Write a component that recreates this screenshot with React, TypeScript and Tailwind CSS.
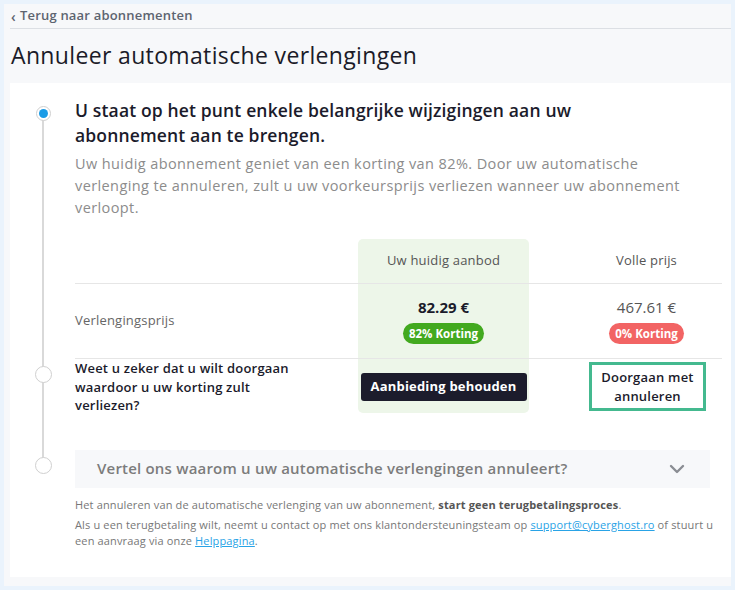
import React from "react";

function Chevron() {
  return (
    <svg width="16" height="10" viewBox="0 0 16 10" fill="none">
      <path d="M2 2l6 6 6-6" stroke="#8a8d93" strokeWidth="2.4" strokeLinecap="round" strokeLinejoin="round" />
    </svg>
  );
}

export default function App() {
  return (
    <div
      className="w-[735px] h-[590px] bg-[#eaf3fc] pt-[4px] pl-[4px] overflow-hidden"
      style={{ fontFamily: '"Open Sans", "DejaVu Sans", sans-serif' }}
    >
      <div className="w-[727px] h-[582px] bg-[#f7f8fa] flex flex-col">
        <div className="pl-[7px] h-[24px] flex items-center text-[13px] text-[#5d6470] font-semibold tracking-[0.2px]">
          <span className="mr-[4px] text-[14px]">‹</span>Terug naar abonnementen
        </div>
        <div className="ml-[6px] h-px bg-[#dcdfe4]" />
        <h1 className="ml-[7px] mt-[11px] text-[23px] leading-[30px] text-[#1b1b28] font-normal tracking-[0.35px]">
          Annuleer automatische verlengingen
        </h1>
        <div className="ml-[6px] mt-[13px] bg-white h-[494px] relative">
          <div className="absolute left-[32px] top-[30px] w-[2px] h-[353px] bg-[#d9d9d9]" />
          <div className="grid grid-cols-[65px_647px]">
            {/* step 1 */}
            <div className="pt-[23px] flex justify-center">
              <div className="relative z-10 w-[15px] h-[15px] rounded-full border-[1.5px] border-[#cfcfcf] bg-white flex items-center justify-center ml-[1px]">
                <div className="w-[9px] h-[9px] rounded-full bg-[#1a9be6]" />
              </div>
            </div>
            <div className="pt-[15px]">
              <div className="text-[17.5px] leading-[25px] font-semibold text-[#1b1b2b] w-[590px] tracking-[0.15px]">
                U staat op het punt enkele belangrijke wijzigingen aan uw abonnement aan te brengen.
              </div>
              <div className="mt-[5px] text-[14.5px] leading-[22px] text-[#8c8c8c] w-[615px] tracking-[0.4px]">
                Uw huidig abonnement geniet van een korting van 82%. Door uw automatische verlenging te annuleren, zult u uw voorkeursprijs verliezen wanneer uw abonnement verloopt.
              </div>
            </div>

            {/* table: header + price rows */}
            <div />
            <div className="mt-[20px] grid grid-cols-[283px_171px_193px]">
              <div className="h-[45px] border-b border-[#e6e6e6]" />
              <div className="h-[45px] border-b border-[#e6e6e6] bg-[#edf6e9] rounded-t-[5px] flex items-center justify-center text-[13px] text-[#555] tracking-[0.2px]">
                Uw huidig aanbod
              </div>
              <div className="h-[45px] border-b border-[#e6e6e6] flex items-center justify-center pl-[42px] text-[13px] text-[#555] tracking-[0.2px]">
                Volle prijs
              </div>

              <div className="h-[75px] border-b border-[#e6e6e6] flex items-center text-[13px] text-[#666] tracking-[0.2px]">
                Verlengingsprijs
              </div>
              <div className="h-[75px] border-b border-[#e6e6e6] bg-[#edf6e9] flex flex-col items-center pt-[13px]">
                <div className="text-[15px] leading-[20px] font-bold text-[#1b1b2b]">82.29 €</div>
                <div className="mt-[6px] h-[21px] px-[6px] rounded-full bg-[#42a91f] text-white text-[11.5px] font-bold flex items-center">
                  82% Korting
                </div>
              </div>
              <div className="h-[75px] border-b border-[#e6e6e6] flex flex-col items-center pl-[42px] pt-[13px]">
                <div className="text-[15px] leading-[20px] text-[#555]">467.61 €</div>
                <div className="mt-[6px] h-[21px] px-[6px] rounded-full bg-[#f26464] text-white text-[11.5px] font-bold flex items-center">
                  0% Korting
                </div>
              </div>
            </div>

            {/* step 2 */}
            <div className="flex justify-center pt-[7px]">
              <div className="relative z-10 w-[17px] h-[17px] rounded-full border-[1.5px] border-[#d0d0d0] bg-white ml-[1px]" />
            </div>
            <div className="grid grid-cols-[283px_171px_193px]">
              <div className="text-[13px] leading-[18.5px] font-semibold text-[#1b1b2b] w-[225px] tracking-[0.2px]">
                Weet u zeker dat u wilt doorgaan waardoor u uw korting zult verliezen?
              </div>
              <div className="bg-[#edf6e9] rounded-b-[5px] h-[54px] flex justify-center pt-[14px]">
                <button className="h-[28px] px-[10px] rounded-[3px] bg-[#1c1c2c] text-white text-[13px] font-bold tracking-[0.2px]">
                  Aanbieding behouden
                </button>
              </div>
              <div className="pl-[60px] pt-[3px]">
                <button className="w-[117px] h-[49px] border-[3px] border-[#44b98f] bg-white text-[13px] leading-[19px] font-semibold text-[#1b1b2b] tracking-[0.2px]">
                  Doorgaan met annuleren
                </button>
              </div>
            </div>

            {/* step 3 */}
            <div className="flex justify-center pt-[42px]">
              <div className="relative z-10 w-[17px] h-[17px] rounded-full border-[1.5px] border-[#d0d0d0] bg-white ml-[1px]" />
            </div>
            <div className="pt-[35px] pr-[12px]">
              <div className="h-[38px] bg-[#f7f8fa] flex items-center justify-between pl-[22px] pr-[25px]">
                <span className="text-[15px] font-semibold text-[#7c7c7c] tracking-[0.2px]">
                  Vertel ons waarom u uw automatische verlengingen annuleert?
                </span>
                <Chevron />
              </div>
            </div>

            <div />
            <div className="pt-[9px] text-[11px] leading-[16px] text-[#777] tracking-[0.15px]">
              <p>
                Het annuleren van de automatische verlenging van uw abonnement,{" "}
                <span className="font-bold text-[#555]">start geen terugbetalingsproces</span>.
              </p>
              <p className="mt-[4px]">
                Als u een terugbetaling wilt, neemt u contact op met ons klantondersteuningsteam op{" "}
                <a className="underline text-[#29a3e6]">support@cyberghost.ro</a> of stuurt u een aanvraag via onze{" "}
                <a className="underline text-[#29a3e6]">Helppagina</a>.
              </p>
            </div>
          </div>
        </div>
      </div>
    </div>
  );
}
